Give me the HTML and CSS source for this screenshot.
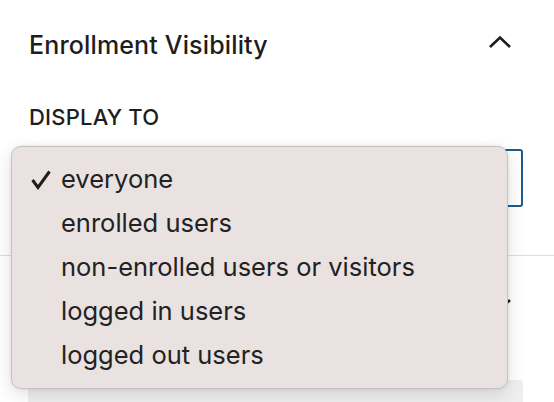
FILE: index.html
```html
<!DOCTYPE html>
<html lang="en">
<head>
    <meta charset="UTF-8">
    <meta name="viewport" content="width=device-width, initial-scale=1.0">
    <title>Enrollment Visibility</title>
    <link rel="stylesheet" href="styles.css">
</head>
<body>
    <div class="sidebar">
        <div class="panel">
            <div class="panel-head">
                <h2>Enrollment Visibility</h2>
                <svg class="chevron" width="24" height="24" viewBox="0 0 24 24">
                    <path d="M2 14 L12 4.5 L22 14" fill="none" stroke="#1e1e1e" stroke-width="2.6"/>
                </svg>
            </div>
            <p class="label">DISPLAY TO</p>
            <div class="select-box"></div>
        </div>
        <div class="panel next">
            <div class="panel-head">
                <h2>&nbsp;</h2>
                <svg class="chevron" width="24" height="24" viewBox="0 0 24 24">
                    <path d="M2 10 L12 19.5 L22 10" fill="none" stroke="#1e1e1e" stroke-width="2.6"/>
                </svg>
            </div>
            <div class="gray-box"></div>
        </div>

        <ul class="menu">
            <li>
                <svg class="tick" width="20" height="20" viewBox="0 0 20 20">
                    <path d="M1.5 10 L7 17.5 L18.5 1.5" fill="none" stroke="#1e1e1e" stroke-width="3"/>
                </svg>
                everyone
            </li>
            <li>enrolled users</li>
            <li>non-enrolled users or visitors</li>
            <li>logged in users</li>
            <li>logged out users</li>
        </ul>
    </div>
</body>
</html>
```

FILE: styles.css
```css
body {
    margin: 0;
    background: #fff;
    font-family: Inter, "Noto Sans", sans-serif;
    color: #1e1e1e;
    overflow: hidden;
}

.sidebar {
    position: relative;
    height: 402px;
}

.panel {
    padding: 26px 31px 0 29px;
}

.panel-head {
    display: flex;
    justify-content: space-between;
    align-items: center;
    height: 38px;
}

.panel-head h2 {
    margin: 0;
    font-size: 25px;
    font-weight: 500;
    letter-spacing: 0.15px;
}

.chevron {
    margin-right: 11px;
}

.label {
    margin: 41px 0 0;
    font-size: 22px;
    font-weight: 500;
    line-height: 24px;
    letter-spacing: 0.2px;
}

.select-box {
    margin-top: 20px;
    margin-bottom: 48px;
    height: 54px;
    border: 2px solid #1d5c91;
    border-radius: 3px;
    background: #fff;
}

.next {
    border-top: 1.5px solid #dddddd;
    padding-top: 27px;
}

.gray-box {
    margin-top: 59px;
    margin-left: -1px;
    height: 40px;
    background: #efefef;
    border-radius: 3px;
}

.menu {
    position: absolute;
    left: 11px;
    top: 146px;
    width: 495px;
    margin: 0;
    padding: 10px 0 11px;
    list-style: none;
    background: #e9e2e1;
    border: 1px solid #c7c1c0;
    border-radius: 10px;
    box-shadow: 0 6px 18px rgba(0, 0, 0, 0.12), 0 0 4px rgba(0, 0, 0, 0.08);
}

.menu li {
    position: relative;
    height: 44px;
    line-height: 44px;
    padding-left: 49px;
    font-size: 25.5px;
    color: #222;
}

.tick {
    position: absolute;
    left: 19px;
    top: 13px;
}
```
